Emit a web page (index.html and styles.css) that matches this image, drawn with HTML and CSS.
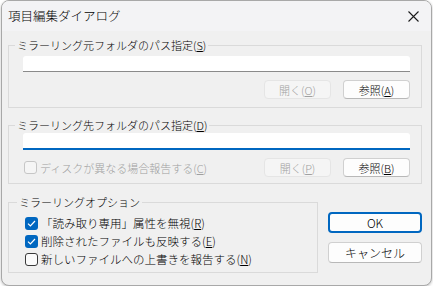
FILE: index.html
```html
<!DOCTYPE html>
<html>
<head>
  <meta charset="utf-8">
  <title>項目編集ダイアログ</title>
  <link rel="stylesheet" href="styles.css">
</head>
<body>
  <div class="window">
    <div class="titlebar">
      <span class="title">項目編集ダイアログ</span>
      <span class="close">
        <svg width="11" height="11" viewBox="0 0 11 11"><path d="M0.5 0.5 L10.5 10.5 M10.5 0.5 L0.5 10.5" stroke="#1b1b1b" stroke-width="1.1" fill="none"/></svg>
      </span>
    </div>
    <div class="content">
      <fieldset class="group group-src">
        <legend>ミラーリング元フォルダのパス指定(<u>S</u>)</legend>
        <div class="textbox"></div>
        <div class="row-buttons">
          <button class="btn" disabled>開く(<u>O</u>)</button>
          <button class="btn">参照(<u>A</u>)</button>
        </div>
      </fieldset>

      <fieldset class="group group-dst">
        <legend>ミラーリング先フォルダのパス指定(<u>D</u>)</legend>
        <div class="textbox focused"></div>
        <div class="row-buttons">
          <label class="check disabled"><span class="box"></span><span>ディスクが異なる場合報告する(<u>C</u>)</span></label>
          <div class="pair">
            <button class="btn" disabled>開く(<u>P</u>)</button>
            <button class="btn">参照(<u>B</u>)</button>
          </div>
        </div>
      </fieldset>

      <div class="bottom">
        <fieldset class="group group-opt">
          <legend>ミラーリングオプション</legend>
          <label class="check"><span class="box on"><svg width="9" height="7" viewBox="0 0 9 7"><path d="M1 3.6 L3.4 6 L8 1" stroke="#fff" stroke-width="1.2" fill="none"/></svg></span><span>「読み取り専用」属性を無視(<u>R</u>)</span></label>
          <label class="check"><span class="box on"><svg width="9" height="7" viewBox="0 0 9 7"><path d="M1 3.6 L3.4 6 L8 1" stroke="#fff" stroke-width="1.2" fill="none"/></svg></span><span>削除されたファイルも反映する(<u>E</u>)</span></label>
          <label class="check"><span class="box"></span><span>新しいファイルへの上書きを報告する(<u>N</u>)</span></label>
        </fieldset>
        <div class="actions">
          <button class="btn wide default">OK</button>
          <button class="btn wide">キャンセル</button>
        </div>
      </div>
    </div>
  </div>
</body>
</html>
```

FILE: styles.css
```css
html, body {
  margin: 0;
  background: #ffffff;
}
body {
  font-family: "Noto Sans CJK JP", "Noto Sans", sans-serif;
  font-size: 11px;
  font-weight: 300;
  color: #000;
}
.window {
  width: 429px;
  height: 284px;
  margin-left: 1px;
  border: 1px solid #a8a8a8;
  border-radius: 8px;
  background: #f0f0f0;
  overflow: hidden;
  box-shadow: 0 1px 3px rgba(0, 0, 0, 0.25);
}
.titlebar {
  height: 30px;
  background: #f3f3f5;
  display: flex;
  align-items: center;
  justify-content: space-between;
  padding: 0 12px 0 6px;
}
.title {
  font-size: 12.5px;
  line-height: 16px;
}
.close {
  display: flex;
  margin-top: 1px;
}
.content {
  padding: 7px 9px 0 6px;
}
.group {
  margin: 0;
  padding: 0;
  border: 1px solid #dadada;
  min-width: 0;
}
.group legend {
  margin-left: 6px;
  padding: 0 2px;
  line-height: 14px;
}
.textbox {
  height: 15px;
  margin: 4px 11px 0 14px;
  background: #fff;
  border-bottom: 1px solid #8a8a8a;
  border-radius: 3px 3px 0 0;
}
.textbox.focused {
  height: 15px;
  margin-top: 1px;
  border-bottom: 2px solid #0067c0;
}
.row-buttons {
  display: flex;
  justify-content: flex-end;
  gap: 12px;
  margin: 8px 11px 8px 14px;
}
.group-dst {
  margin-top: 10px;
}
.group-dst .row-buttons {
  justify-content: space-between;
  align-items: center;
  margin-bottom: 6px;
}
.pair {
  display: flex;
  gap: 12px;
}
.btn {
  font-family: inherit;
  font-size: 11px;
  font-weight: 300;
  width: 67px;
  height: 19px;
  padding: 0;
  background: #fdfdfd;
  border: 1px solid #d0d0d0;
  border-bottom-color: #b8b8b8;
  border-radius: 4px;
  color: #000;
  line-height: 16px;
}
.btn:disabled {
  background: #f5f5f5;
  border-color: #e5e5e5;
  color: #a0a0a0;
}
.check {
  display: flex;
  align-items: center;
  gap: 3px;
  height: 18px;
  line-height: 14px;
}
.check.disabled {
  color: #a0a0a0;
  margin-left: 1px;
}
.box {
  width: 11px;
  height: 11px;
  border: 1px solid #3a3a3a;
  border-radius: 3px;
  background: #fbfbfb;
  display: flex;
  align-items: center;
  justify-content: center;
}
.check.disabled .box {
  border-color: #c6c6c6;
  background: #f5f5f5;
}
.box.on {
  width: 13px;
  height: 13px;
  border: none;
  background: #0067c0;
}
.bottom {
  display: flex;
  align-items: flex-start;
  gap: 10px;
  margin-top: 11px;
}
.group-opt {
  width: 306px;
  padding: 5px 0 4px 16px;
  font-size: 11.5px;
}
.group-opt legend {
  margin-left: -8px;
  font-size: 11px;
}
.actions {
  display: flex;
  flex-direction: column;
  gap: 9px;
  padding-top: 17px;
}
.btn.wide {
  width: 94px;
  height: 21px;
  font-size: 12px;
}
.btn.default {
  border: 2px solid #0067c0;
}
```
